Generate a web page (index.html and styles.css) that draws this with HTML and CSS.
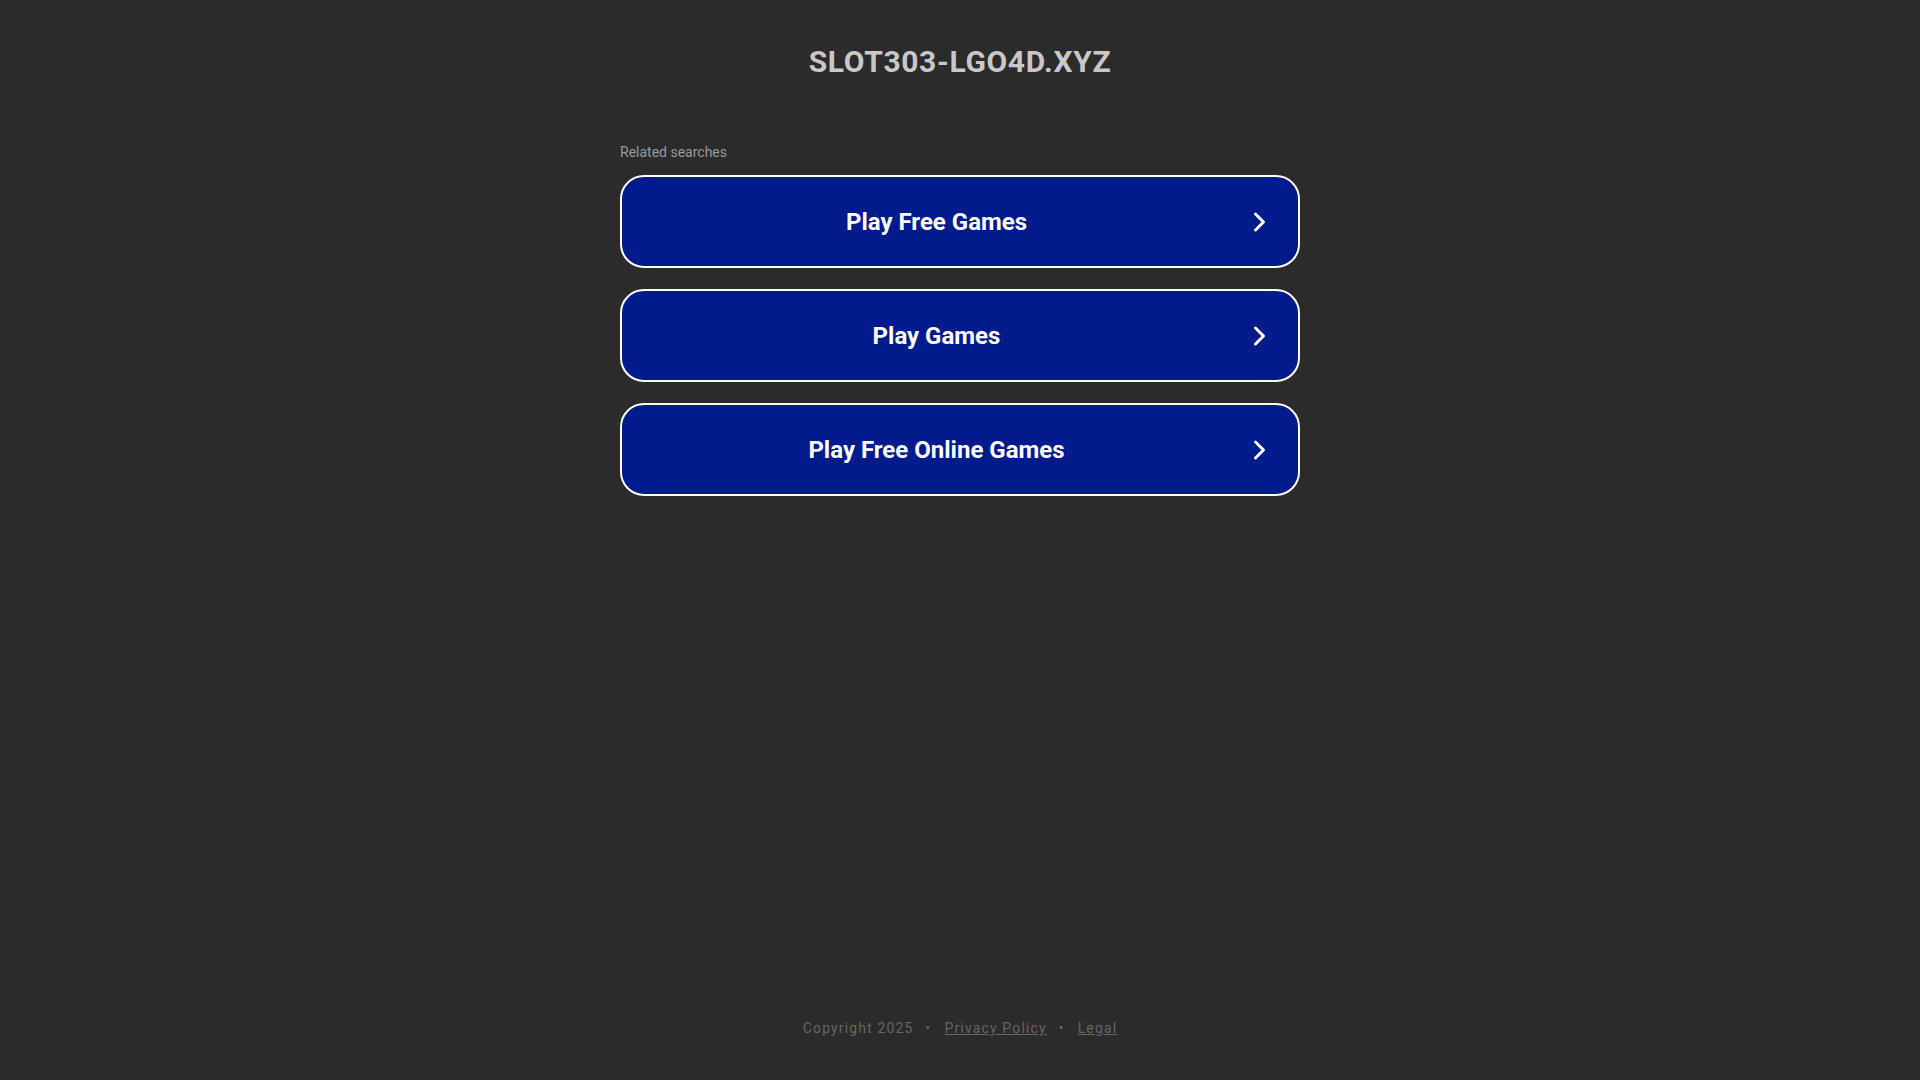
FILE: index.html
```html
<!DOCTYPE html>
<html lang="en">
<head>
<meta charset="utf-8">
<title>slot303-lgo4d.xyz</title>
<link rel="stylesheet" href="styles.css">
</head>
<body>
<div class="page">
  <header class="header">
    <h1 class="domain">SLOT303-LGO4D.XYZ</h1>
  </header>
  <main class="content">
    <p class="related">Related searches</p>
    <ul class="links">
      <li><a class="link" href="#"><span class="link-text">Play Free Games</span><span class="chev"><svg viewBox="0 0 24 24" width="24" height="24"><path d="M8.5 4 L16.5 12 L8.5 20" fill="none" stroke="#fff" stroke-width="3" stroke-linecap="round" stroke-linejoin="round"/></svg></span></a></li>
      <li><a class="link" href="#"><span class="link-text">Play Games</span><span class="chev"><svg viewBox="0 0 24 24" width="24" height="24"><path d="M8.5 4 L16.5 12 L8.5 20" fill="none" stroke="#fff" stroke-width="3" stroke-linecap="round" stroke-linejoin="round"/></svg></span></a></li>
      <li><a class="link" href="#"><span class="link-text">Play Free Online Games</span><span class="chev"><svg viewBox="0 0 24 24" width="24" height="24"><path d="M8.5 4 L16.5 12 L8.5 20" fill="none" stroke="#fff" stroke-width="3" stroke-linecap="round" stroke-linejoin="round"/></svg></span></a></li>
    </ul>
  </main>
  <footer class="footer">
    <span>Copyright 2025</span><span class="dot">•</span><a href="#">Privacy Policy</a><span class="dot">•</span><a href="#">Legal</a>
  </footer>
</div>
</body>
</html>
```

FILE: styles.css
```css
html, body {
  margin: 0;
  padding: 0;
  background: #2b2b2b;
  font-family: Roboto, "Liberation Sans", Arial, sans-serif;
}
.page {
  min-height: 100vh;
  display: flex;
  flex-direction: column;
  align-items: center;
  box-sizing: border-box;
}
.header {
  padding-top: 44px;
}
.domain {
  margin: 0;
  font-size: 30px;
  line-height: 36px;
  font-weight: 700;
  color: #c8c8c8;
  letter-spacing: 0.65px;
}
.content {
  width: 680px;
  margin-top: 64px;
}
.related {
  margin: 0 0 14px 0;
  font-size: 14px;
  line-height: 17px;
  color: #999999;
}
.links {
  list-style: none;
  margin: 0;
  padding: 0;
  display: flex;
  flex-direction: column;
  gap: 21px;
}
.link {
  display: flex;
  align-items: center;
  height: 93px;
  box-sizing: border-box;
  padding: 0 19px 0 22px;
  background: #011a8c;
  border: 2px solid #ffffff;
  border-radius: 24px;
  text-decoration: none;
  color: #ffffff;
}
.link-text {
  flex: 1;
  text-align: center;
  font-size: 24px;
  font-weight: 700;
}
.chev {
  width: 40px;
  margin-left: 10px;
  display: flex;
  justify-content: center;
  align-items: center;
}
.chev svg {
  display: block;
}
.footer {
  margin-top: auto;
  padding-bottom: 43px;
  font-size: 14px;
  line-height: 17px;
  letter-spacing: 1.15px;
  color: #666666;
}
.footer a {
  color: #666666;
  text-decoration: underline;
}
.dot {
  margin: 0 13px 0 12px;
}
```
